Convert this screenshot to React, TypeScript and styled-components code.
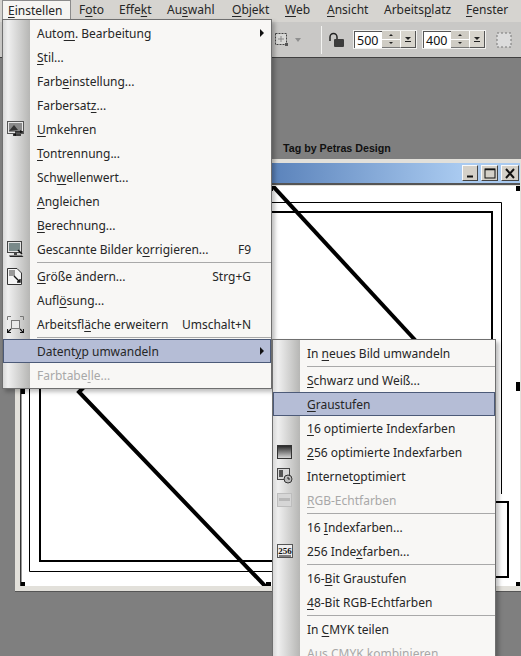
import React from "react";
import styled, { createGlobalStyle } from "styled-components";

const GlobalStyle = createGlobalStyle`
  html, body {
    margin: 0;
    padding: 0;
    width: 521px;
    height: 656px;
    overflow: hidden;
    background: #7f7f7f;
  }
`;

const Shell = styled.div`
  position: relative;
  display: flex;
  flex-direction: column;
  width: 521px;
  height: 656px;
  overflow: hidden;
  font-family: "Noto Sans", "Liberation Sans", sans-serif;
  font-size: 12px;
  color: #262626;
`;

const MenuBar = styled.div`
  display: flex;
  flex: none;
  height: 22px;
  padding-left: 2px;
  background: #d6d4d0;
`;

const BarItem = styled.div<{ $active?: boolean; $width: number }>`
  box-sizing: border-box;
  width: ${(p) => p.$width}px;
  height: 20px;
  margin-right: ${(p) => (p.$active ? 2 : 0)}px;
  padding-left: ${(p) => (p.$active ? 5 : 6)}px;
  line-height: 20px;
  white-space: nowrap;
  background: ${(p) => (p.$active ? "#f6f5f2" : "transparent")};
  border-right: ${(p) => (p.$active ? "1px solid #8b8b8b" : "none")};
  border-left: ${(p) => (p.$active ? "1px solid #8b8b8b" : "none")};
  border-top: ${(p) => (p.$active ? "1px solid #8b8b8b" : "none")};

  u {
    text-underline-offset: 2px;
    text-decoration-thickness: 1px;
  }
`;

const Toolbar = styled.div`
  display: flex;
  flex: none;
  align-items: center;
  box-sizing: border-box;
  height: 36px;
  padding-left: 275px;
  background: #c9c8c6;
  border-bottom: 1px solid #3f3f3f;
`;

const ToolIcon = styled.svg<{ $gap?: number }>`
  flex: none;
  margin-left: ${(p) => p.$gap ?? 0}px;
`;

const ToolSeparator = styled.div`
  width: 1px;
  height: 28px;
  margin: 0 7px 0 18px;
  background: #f4f4f2;
`;

const SpinGroup = styled.div<{ $gap: number }>`
  display: flex;
  box-sizing: border-box;
  width: 64px;
  height: 19px;
  margin-left: ${(p) => p.$gap}px;
  border: 1px solid #f2f2f0;
  background: #d4d0c8;
`;

const SpinInput = styled.div`
  box-sizing: border-box;
  width: 28px;
  height: 100%;
  padding-left: 2px;
  line-height: 17px;
  font-size: 12.5px;
  background: #ffffff;
  border-top: 1px solid #555555;
  border-left: 1px solid #555555;
  color: #111111;
`;

const SpinStack = styled.div`
  display: flex;
  flex-direction: column;
  width: 18px;
`;

const SpinHalf = styled.div<{ $down?: boolean }>`
  flex: 1;
  display: flex;
  align-items: center;
  justify-content: center;
  background: #cfccc4;
  border-bottom: ${(p) => (p.$down ? "1px solid #777" : "1px solid #fff")};

  &::after {
    content: "";
    border-left: 2px solid transparent;
    border-right: 2px solid transparent;
    ${(p) => (p.$down ? "border-top: 2px solid #222;" : "border-bottom: 2px solid #222;")}
  }
`;

const SpinDrop = styled.div`
  flex: 1;
  display: flex;
  flex-direction: column;
  align-items: center;
  justify-content: center;
  gap: 1px;
  background: #d8d5cd;
  border-right: 1px solid #555;
  border-bottom: 1px solid #555;
  border-left: 1px solid #fff;

  &::before {
    content: "";
    border-left: 3px solid transparent;
    border-right: 3px solid transparent;
    border-top: 3px solid #222;
  }

  &::after {
    content: "";
    width: 6px;
    height: 1px;
    background: #222;
  }
`;

const Workspace = styled.div`
  position: relative;
  flex: 1;
  background: #7f7f7f;
`;

const Credit = styled.div`
  position: absolute;
  left: 283px;
  top: 84px;
  font-family: "Liberation Sans", Arial, sans-serif;
  font-size: 10.7px;
  font-weight: bold;
  color: #111111;
  white-space: nowrap;
`;

const DocWindow = styled.div`
  position: absolute;
  left: 15px;
  top: 101px;
  box-sizing: border-box;
  width: 507px;
  height: 432px;
  padding: 4px 2px 4px 5px;
  background: #e2e0da;
  box-shadow: 0 1px 0 #555555;
`;

const TitleBar = styled.div`
  display: flex;
  align-items: center;
  justify-content: flex-end;
  box-sizing: border-box;
  height: 22px;
  margin-left: -5px;
  padding-right: 1px;
  background: linear-gradient(to right, #5a82ba 255px, #a9caf0 445px);
  border-bottom: 2px solid #555555;
`;

const WinButton = styled.div<{ $gap: number; $width: number }>`
  display: flex;
  align-items: center;
  justify-content: center;
  box-sizing: border-box;
  width: ${(p) => p.$width}px;
  height: 16px;
  margin-left: ${(p) => p.$gap}px;
  background: #d4d0c8;
  border: 1px solid;
  border-color: #fafafa #444444 #444444 #fafafa;
`;

const Canvas = styled.svg`
  display: block;
  width: 500px;
  height: 400px;
  margin-top: 1px;
  background: #ffffff;
`;

const Menu = styled.div`
  position: absolute;
  box-sizing: border-box;
  padding: 1px 0;
  background:
    linear-gradient(to right, #d8d8d8 0, #efefef 5px, #b6b6b4 100%) 0 0 / 27px 100% no-repeat,
    #f8f7f5;
  border: 1px solid #6f6f6f;
  box-shadow: 3px 3px 4px rgba(0, 0, 0, 0.25);
`;

const MainMenu = styled(Menu)`
  left: 2px;
  top: 19px;
  width: 270px;
  height: 370px;
`;

const SubMenu = styled(Menu)`
  left: 272px;
  top: 339px;
  width: 224px;
  height: 340px;
`;

const Row = styled.div<{ $active?: boolean; $disabled?: boolean }>`
  display: flex;
  align-items: center;
  box-sizing: border-box;
  height: 24px;
  white-space: nowrap;
  color: ${(p) => (p.$disabled ? "#a8a8a8" : "#262626")};
  background: ${(p) => (p.$active ? "#b5bdd6" : "transparent")};
  border: 1px solid ${(p) => (p.$active ? "#4c5a78" : "transparent")};

  u {
    text-underline-offset: 2px;
    text-decoration-thickness: 1px;
  }
`;

const IconSlot = styled.div`
  display: flex;
  align-items: center;
  flex: none;
  box-sizing: border-box;
  width: 33px;
  height: 100%;
  padding-left: 3px;
`;

const Shortcut = styled.span`
  margin-left: auto;
  margin-right: 19px;
`;

const Arrow = styled.span`
  margin-left: auto;
  margin-right: 6px;
  border-top: 4px solid transparent;
  border-bottom: 4px solid transparent;
  border-left: 4px solid #111111;
`;

const Separator = styled.div`
  height: 3px;
  margin-left: 34px;
  background: linear-gradient(#a9a9a9, #a9a9a9) 0 1px / 100% 1px no-repeat;
`;

const Mnemonic = ({ text }: { text: string }) => {
  const i = text.indexOf("&");
  if (i < 0) return <>{text}</>;
  return (
    <>
      {text.slice(0, i)}
      <u>{text[i + 1]}</u>
      {text.slice(i + 2)}
    </>
  );
};

const InvertIcon = () => (
  <svg width="17" height="16" viewBox="0 0 17 16">
    <rect x="0.5" y="0.5" width="16" height="12" fill="#e8e8e8" stroke="#555" />
    <rect x="2" y="2" width="13" height="9" fill="#8a8a8a" />
    <path d="M2 10 L7 4 L11 9 Z" fill="#333" />
    <path d="M8 11 H16 M6 14 H14" stroke="#111" strokeWidth="1.5" />
    <path d="M13 9 L16 11 L13 12 Z M9 12 L6 14 L9 15 Z" fill="#111" />
  </svg>
);

const ScanIcon = () => (
  <svg width="17" height="17" viewBox="0 0 17 17">
    <rect x="0.5" y="0.5" width="14" height="11" fill="#e4e4e4" stroke="#444" />
    <rect x="2" y="2" width="11" height="8" fill="#7a8a8a" />
    <path d="M2 14.5 H15 L16.5 16 H3 Z" fill="#222" />
    <path d="M7 12 H10 V14 H7 Z" fill="#444" />
    <path d="M11 9 L15 13" stroke="#111" strokeWidth="1.5" />
  </svg>
);

const ResizeIcon = () => (
  <svg width="15" height="17" viewBox="0 0 15 17">
    <path d="M0.5 0.5 H10 L14.5 5 V16.5 H0.5 Z" fill="#f4f4f4" stroke="#333" />
    <rect x="2" y="2" width="6" height="6" fill="#999" />
    <path d="M7 8 L13 14 M10 14 H13 V11" stroke="#111" strokeWidth="1.4" fill="none" />
  </svg>
);

const ExpandIcon = () => (
  <svg width="17" height="17" viewBox="0 0 17 17">
    <rect x="4.5" y="4.5" width="8" height="8" fill="#e8e8e8" stroke="#777" />
    <path d="M0.5 4 V0.5 H4 M13 0.5 H16.5 V4" stroke="#777" fill="none" />
    <path d="M0.5 13 V16.5 H4 M13 16.5 H16.5 V13 M1 16 L4 13 M16 16 L13 13" stroke="#111" strokeWidth="1.2" fill="none" />
  </svg>
);

const GradientIcon = () => (
  <svg width="15" height="14" viewBox="0 0 15 14">
    <defs>
      <linearGradient id="gradBlack" x1="0" y1="0" x2="0" y2="1">
        <stop offset="0" stopColor="#222" />
        <stop offset="1" stopColor="#ddd" />
      </linearGradient>
    </defs>
    <rect x="0.5" y="0.5" width="14" height="13" fill="url(#gradBlack)" stroke="#333" />
  </svg>
);

const WebIcon = () => (
  <svg width="16" height="16" viewBox="0 0 16 16">
    <rect x="0.5" y="0.5" width="12" height="11" fill="#d8d8d8" stroke="#444" />
    <rect x="2" y="2" width="4" height="7" fill="#555" />
    <circle cx="11" cy="11" r="4" fill="#bbb" stroke="#333" />
    <path d="M11 9 V11 H13" stroke="#222" fill="none" />
  </svg>
);

const RgbIcon = () => (
  <svg width="15" height="14" viewBox="0 0 15 14">
    <rect x="0.5" y="0.5" width="14" height="13" fill="#d6d6d6" stroke="#bdbdbd" />
    <rect x="2" y="5" width="11" height="3" fill="#b8b8b8" />
  </svg>
);

const Icon256 = () => (
  <svg width="16" height="14" viewBox="0 0 16 14">
    <rect x="0.5" y="0.5" width="15" height="13" fill="#eeeeee" stroke="#555" />
    <text x="8" y="10" textAnchor="middle" fontFamily="Liberation Serif, serif" fontWeight="bold" fontSize="9" fill="#111">
      256
    </text>
    <path d="M2 12 H14" stroke="#111" />
  </svg>
);

type Item =
  | "sep"
  | {
      label: string;
      icon?: React.ReactNode;
      shortcut?: string;
      sub?: boolean;
      active?: boolean;
      disabled?: boolean;
    };

const mainItems: Item[] = [
  { label: "Auto&m. Bearbeitung", sub: true },
  { label: "&Stil..." },
  { label: "Farb&einstellung..." },
  { label: "Farbersat&z..." },
  { label: "&Umkehren", icon: <InvertIcon /> },
  { label: "&Tontrennung..." },
  { label: "Sch&wellenwert..." },
  { label: "&Angleichen" },
  { label: "&Berechnung..." },
  { label: "Gescannte Bilder k&orrigieren...", shortcut: "F9", icon: <ScanIcon /> },
  "sep",
  { label: "&Größe ändern...", shortcut: "Strg+G", icon: <ResizeIcon /> },
  { label: "Aufl&ösung..." },
  { label: "Arbeitsfl&äche erweitern", shortcut: "Umschalt+N", icon: <ExpandIcon /> },
  "sep",
  { label: "Datent&yp umwandeln", sub: true, active: true },
  { label: "Farbtabe&lle...", disabled: true },
];

const subItems: Item[] = [
  { label: "In &neues Bild umwandeln" },
  "sep",
  { label: "&Schwarz und Weiß..." },
  { label: "&Graustufen", active: true },
  { label: "&16 optimierte Indexfarben" },
  { label: "&256 optimierte Indexfarben", icon: <GradientIcon /> },
  { label: "Internet&optimiert", icon: <WebIcon /> },
  { label: "&RGB-Echtfarben", icon: <RgbIcon />, disabled: true },
  "sep",
  { label: "16 &Indexfarben..." },
  { label: "256 Inde&xfarben...", icon: <Icon256 /> },
  "sep",
  { label: "16-&Bit Graustufen" },
  { label: "&48-Bit RGB-Echtfarben" },
  "sep",
  { label: "In &CMYK teilen" },
  { label: "Aus CMYK kombinieren", disabled: true },
];

const MenuRows = ({ items }: { items: Item[] }) => (
  <>
    {items.map((item, i) =>
      item === "sep" ? (
        <Separator key={i} />
      ) : (
        <Row key={i} $active={item.active} $disabled={item.disabled}>
          <IconSlot>{item.icon}</IconSlot>
          <span>
            <Mnemonic text={item.label} />
          </span>
          {item.shortcut && <Shortcut>{item.shortcut}</Shortcut>}
          {item.sub && <Arrow />}
        </Row>
      )
    )}
  </>
);

const barItems = [
  { label: "&Einstellen", width: 69 },
  { label: "F&oto", width: 40 },
  { label: "Effe&kt", width: 48 },
  { label: "Au&swahl", width: 65 },
  { label: "&Objekt", width: 53 },
  { label: "&Web", width: 42 },
  { label: "&Ansicht", width: 57 },
  { label: "Arbeits&platz", width: 82 },
  { label: "&Fenster", width: 55 },
];

const handles = [
  [248, 0, 5, 5],
  [496, 0, 4, 5],
  [1, 202, 4, 6],
  [496, 196, 4, 9],
  [1, 396, 4, 4],
  [246, 396, 5, 4],
  [496, 396, 4, 4],
];

const Spinner = ({ value, gap }: { value: string; gap: number }) => (
  <SpinGroup $gap={gap}>
    <SpinInput>{value}</SpinInput>
    <SpinStack>
      <SpinHalf />
      <SpinHalf $down />
    </SpinStack>
    <SpinDrop />
  </SpinGroup>
);

export default function App() {
  return (
    <>
      <GlobalStyle />
      <Shell>
        <MenuBar>
          {barItems.map((b, i) => (
            <BarItem key={b.label} $width={b.width} $active={i === 0}>
              <Mnemonic text={b.label} />
            </BarItem>
          ))}
        </MenuBar>
        <Toolbar>
          <ToolIcon width="14" height="14" viewBox="0 0 14 14">
            <rect x="0.5" y="0.5" width="11" height="11" fill="#d8d8d6" stroke="#444" strokeDasharray="2 1" />
            <path d="M6 3 V9 M3 6 H9" stroke="#888" />
            <rect x="10" y="10" width="3" height="3" fill="#555" />
          </ToolIcon>
          <ToolIcon $gap={4} width="10" height="6" viewBox="0 0 10 6">
            <path d="M2 1 H8 L5 5 Z" fill="#8f8f8f" />
          </ToolIcon>
          <ToolSeparator />
          <ToolIcon width="18" height="16" viewBox="0 0 18 16">
            <path d="M1 9 V5 A3.5 3.5 0 0 1 8 5 V8" stroke="#222" strokeWidth="1.5" fill="none" />
            <rect x="5" y="7" width="10" height="8" rx="1" fill="#3c3c3c" />
          </ToolIcon>
          <Spinner value="500" gap={6} />
          <Spinner value="400" gap={5} />
          <ToolIcon $gap={9} width="18" height="18" viewBox="0 0 18 18">
            <rect x="2" y="2" width="14" height="14" fill="#dcdcdc" stroke="#777" strokeDasharray="2 2" />
          </ToolIcon>
        </Toolbar>
        <Workspace>
          <Credit>Tag by Petras Design</Credit>
          <DocWindow>
            <TitleBar>
              <WinButton $gap={0} $width={16}>
                <svg width="11" height="10" viewBox="0 0 11 10">
                  <path d="M2 8.5 H8" stroke="#111" strokeWidth="2" />
                </svg>
              </WinButton>
              <WinButton $gap={3} $width={17}>
                <svg width="12" height="11" viewBox="0 0 12 11">
                  <rect x="1" y="1" width="10" height="9" fill="none" stroke="#111" />
                  <path d="M1 1.5 H11" stroke="#111" strokeWidth="1.5" />
                </svg>
              </WinButton>
              <WinButton $gap={3} $width={18}>
                <svg width="12" height="11" viewBox="0 0 12 11">
                  <path d="M2 1 L10 10 M10 1 L2 10" stroke="#111" strokeWidth="2" />
                </svg>
              </WinButton>
            </TitleBar>
            <Canvas viewBox="0 0 500 400">
              <path d="M0.75 0 V400" stroke="#333" strokeWidth="1.5" />
              <path d="M481.5 308 V16.5 H9.5 V385.5 H300" fill="none" stroke="#000" strokeWidth="1" />
              <path d="M300 375 H20 V26 H472 V200" fill="none" stroke="#000" strokeWidth="2" />
              <path d="M450 316 H488 V391 H450" fill="none" stroke="#000" strokeWidth="2" />
              <path d="M250 -3 L396 155" fill="none" stroke="#000" strokeWidth="4" />
              <path d="M69 196 L59 206 L247 402" fill="none" stroke="#000" strokeWidth="4" />
              {handles.map(([x, y, w, h]) => (
                <rect key={`${x}-${y}`} x={x} y={y} width={w} height={h} fill="#000" />
              ))}
            </Canvas>
          </DocWindow>
        </Workspace>
        <MainMenu>
          <MenuRows items={mainItems} />
        </MainMenu>
        <SubMenu>
          <MenuRows items={subItems} />
        </SubMenu>
      </Shell>
    </>
  );
}
